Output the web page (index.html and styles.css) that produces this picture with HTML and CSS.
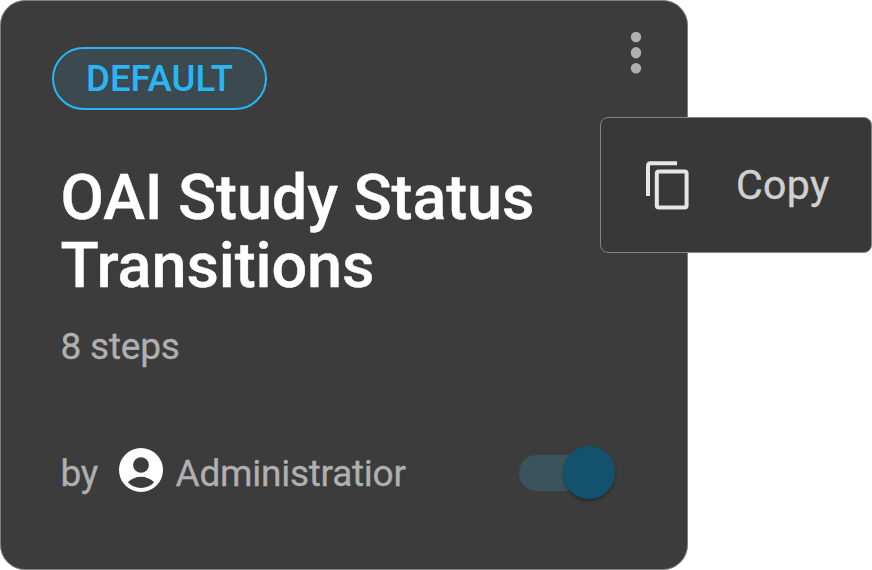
FILE: index.html
```html
<!DOCTYPE html>
<html lang="en">
<head>
<meta charset="utf-8">
<title>Workflow</title>
<link rel="stylesheet" href="styles.css">
</head>
<body>
<article class="card">
  <header class="card-header">
    <span class="badge">DEFAULT</span>
    <button class="more" aria-label="More"><svg viewBox="0 0 12 44" width="12" height="44"><circle cx="6" cy="6" r="5.200"/><ellipse cx="6" cy="21.700" rx="5.200" ry="5.700"/><circle cx="6" cy="37.200" r="5.200"/></svg></button>
  </header>
  <h1 class="title">OAI Study Status Transitions</h1>
  <p class="steps">8 steps</p>
  <footer class="card-footer">
    <span class="by">by</span>
    <svg class="avatar" viewBox="2 2 20 20"><path fill-rule="evenodd" d="M12 2a10 10 0 1 0 0 20a10 10 0 0 0 0-20zM12 6.200a3.600 3.550 0 1 1 0 7.100a3.600 3.550 0 0 1 0-7.100zM6 17.600Q8.700 15.100 12 15.100T18 17.600Q15.500 20.200 12 20.200T6 17.600z"/></svg>
    <span class="name">Administratior</span>
    <span class="switch"><span class="thumb"></span></span>
  </footer>
</article>
<div class="menu">
  <svg class="copy" viewBox="0 0 43 50"><path d="M2 36V6Q2 3.300 4.700 3.300H31"/><rect x="10.800" y="11.500" width="29.800" height="36" rx="2"/></svg>
  <span>Copy</span>
</div>
</body>
</html>
```
FILE: styles.css
```css
* { box-sizing: border-box; }
body { margin: 0; background: #fff; font-family: Roboto, sans-serif; position: relative; width: 872px; height: 570px; overflow: hidden; }
.card { width: 688px; height: 570px; border: 1px solid #808080; border-radius: 25px; background: #3c3c3c; color: #b0b0b0; padding: 46px 45px 0 51px; }
.card-header { display: flex; justify-content: space-between; }
.badge { width: 215px; height: 63px; border: 2px solid #29b6f6; border-radius: 32px; background: #3c494f; color: #29b6f6; font-size: 36.6px; font-weight: 500; line-height: 60px; text-align: center; }
.more { width: 12px; height: 44px; margin-top: -16px; border: 0; padding: 0; background: none; }
.more svg { display: block; fill: #b0b0b0; }
.title { margin: 54px 0 0 8.500px; width: 510px; font-size: 63px; line-height: 68px; letter-spacing: -0.12px; font-weight: 500; color: #fff; -webkit-text-stroke: 0.4px; }
.steps { margin: 23px 0 0 8.500px; font-size: 37px; letter-spacing: -0.2px; line-height: 48px; -webkit-text-stroke: 0.3px; }
.card-footer { display: flex; align-items: center; height: 54px; margin: 75px 27.500px 0 8.500px; font-size: 37px; letter-spacing: -0.25px; -webkit-text-stroke: 0.3px; }
.by { width: 58px; }
.avatar { width: 44px; height: 44px; fill: #fff; margin-top: -6px; }
.name { margin-left: 13px; }
.switch { position: relative; margin-left: auto; width: 96px; height: 36px; border-radius: 18px; background: #3b535d; }
.thumb { position: absolute; right: 0; top: -9px; width: 52px; height: 53px; border-radius: 50%; background: #12526e; box-shadow: 0 2px 3px #0005; }
.menu { position: absolute; left: 600px; top: 117px; width: 272px; height: 136px; border: 1px solid #858585; border-radius: 8px; background: #383838; color: #d0d0d0; display: flex; align-items: center; padding-left: 45px; font-size: 41px; letter-spacing: 0.4px; -webkit-text-stroke: 0.4px; }
.copy { width: 43px; height: 50px; fill: none; stroke: #e6e6e6; stroke-width: 4px; margin-right: 47px; }
```
